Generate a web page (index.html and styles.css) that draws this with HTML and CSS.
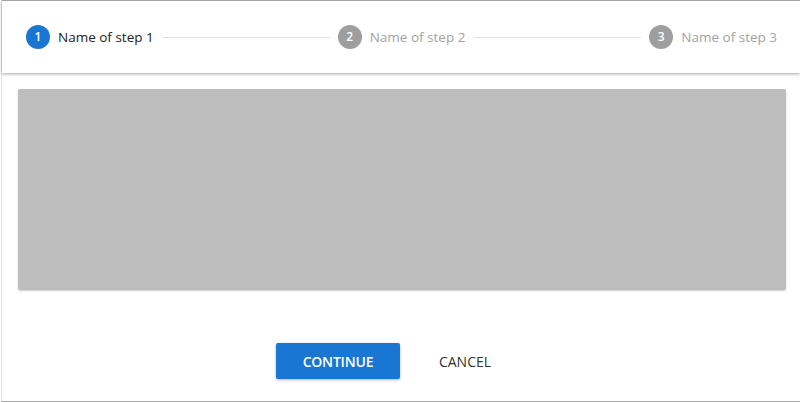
FILE: index.html
```html
<!DOCTYPE html>
<html>
<head>
  <title>Stepper</title>
  <link rel="stylesheet" href="styles.css">
</head>
<body>
  <div class="frame">
    <div class="stepper-header">
      <div class="step active">
        <span class="step-index">1</span>
        <span class="step-label">Name of step 1</span>
      </div>
      <div class="step-line"></div>
      <div class="step">
        <span class="step-index">2</span>
        <span class="step-label">Name of step 2</span>
      </div>
      <div class="step-line"></div>
      <div class="step">
        <span class="step-index">3</span>
        <span class="step-label">Name of step 3</span>
      </div>
    </div>

    <div class="step-content">
      <div class="placeholder"></div>
    </div>

    <div class="step-actions">
      <button class="btn btn-primary">CONTINUE</button>
      <button class="btn btn-flat">CANCEL</button>
    </div>
  </div>
</body>
</html>
```

FILE: styles.css
```css
html, body {
  margin: 0;
  padding: 0;
  background: #fff;
  font-family: "Open Sans", "Noto Sans", Arial, sans-serif;
  overflow: hidden;
}

.frame {
  box-sizing: border-box;
  height: 402px;
  margin-left: 1px;
  border-top: 1px solid #b0b0b0;
  border-left: 1px solid #e2e2e2;
  border-bottom: 1px solid #a8a8a8;
  display: flex;
  flex-direction: column;
}

.stepper-header {
  display: flex;
  align-items: center;
  height: 72px;
  padding: 0 23px 0 24px;
  background: #fff;
  box-shadow: 0 1px 3px rgba(0, 0, 0, 0.35);
  position: relative;
  z-index: 1;
}

.step {
  display: flex;
  align-items: center;
  flex-shrink: 0;
}

.step-index {
  width: 24px;
  height: 24px;
  border-radius: 50%;
  background: #9e9e9e;
  color: #fff;
  font-size: 12px;
  font-weight: 600;
  line-height: 24px;
  text-align: center;
}

.step-label {
  margin-left: 8px;
  font-size: 13.5px;
  color: #a3a3a3;
}

.step.active .step-index {
  background: #1976d2;
}

.step.active .step-label {
  color: #212121;
}

.step-line {
  flex: 1;
  height: 1px;
  background: #e0e0e0;
  margin: 0 8px 0 9px;
}

.step-content {
  padding: 16px 14px 0 16px;
}

.placeholder {
  height: 201px;
  background: #bdbdbd;
  border-radius: 2px;
  box-shadow: 0 1px 2px rgba(0, 0, 0, 0.2);
}

.step-actions {
  display: flex;
  justify-content: center;
  gap: 16px;
  margin-top: 53px;
  padding-right: 12px;
}

.btn {
  height: 36px;
  border: none;
  border-radius: 2px;
  font-family: "Open Sans", "Noto Sans", Arial, sans-serif;
  font-size: 14px;
  cursor: pointer;
}

.btn-primary {
  width: 124px;
  background: #1976d2;
  color: #fff;
  font-weight: 600;
  letter-spacing: -0.2px;
  box-shadow: 0 1px 3px rgba(0, 0, 0, 0.3);
}

.btn-flat {
  padding: 0 23px;
  background: transparent;
  color: #333;
}
```
